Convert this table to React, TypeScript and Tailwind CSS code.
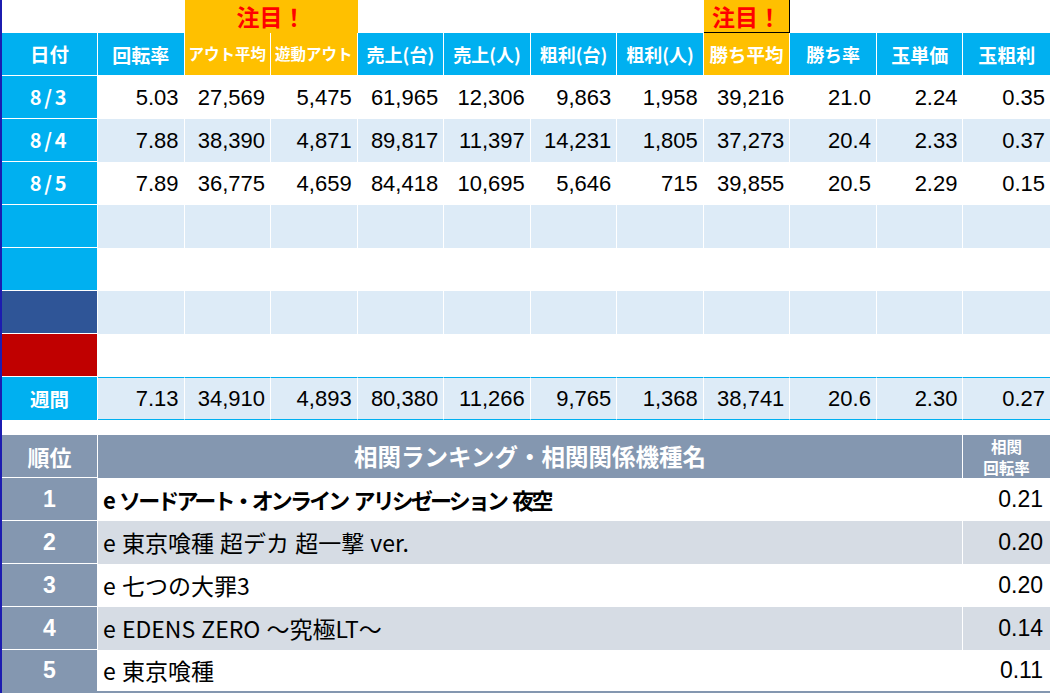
const JP = "font-['Noto_Sans_CJK_JP','Noto_Sans',sans-serif]";
const NUM = "font-['Liberation_Sans','Noto_Sans_CJK_JP',sans-serif]";

const heads = [
  { t: '日付', s: 'text-[19.5px]', o: false },
  { t: '回転率', s: 'text-[19px]', o: false },
  { t: 'アウト平均', s: 'text-[15.5px]', o: true },
  { t: '遊動アウト', s: 'text-[15.5px]', o: true },
  { t: '売上(台)', s: 'text-[18px]', o: false },
  { t: '売上(人)', s: 'text-[18px]', o: false },
  { t: '粗利(台)', s: 'text-[18px]', o: false },
  { t: '粗利(人)', s: 'text-[18px]', o: false },
  { t: '勝ち平均', s: 'text-[18.5px]', o: true },
  { t: '勝ち率', s: 'text-[18px]', o: false },
  { t: '玉単価', s: 'text-[19px]', o: false },
  { t: '玉粗利', s: 'text-[19px]', o: false },
];

const rows = [
  { d: '8/3', bg: 'bg-[#00b0f0]', v: ['5.03', '27,569', '5,475', '61,965', '12,306', '9,863', '1,958', '39,216', '21.0', '2.24', '0.35'] },
  { d: '8/4', bg: 'bg-[#00b0f0]', v: ['7.88', '38,390', '4,871', '89,817', '11,397', '14,231', '1,805', '37,273', '20.4', '2.33', '0.37'] },
  { d: '8/5', bg: 'bg-[#00b0f0]', v: ['7.89', '36,775', '4,659', '84,418', '10,695', '5,646', '715', '39,855', '20.5', '2.29', '0.15'] },
  { d: '', bg: 'bg-[#00b0f0]', v: Array(11).fill('') },
  { d: '', bg: 'bg-[#00b0f0]', v: Array(11).fill('') },
  { d: '', bg: 'bg-[#2f5597]', v: Array(11).fill('') },
  { d: '', bg: 'bg-[#c00000]', v: Array(11).fill('') },
];

const week = ['7.13', '34,910', '4,893', '80,380', '11,266', '9,765', '1,368', '38,741', '20.6', '2.30', '0.27'];

const ranking = [
  { n: 'e ソードアート・オンライン アリシゼーション 夜空', v: '0.21', bold: true },
  { n: 'e 東京喰種 超デカ 超一撃 ver.', v: '0.20' },
  { n: 'e 七つの大罪3', v: '0.20' },
  { n: 'e EDENS ZERO ～究極LT～', v: '0.14' },
  { n: 'e 東京喰種', v: '0.11' },
];

const grid = 'grid grid-cols-[96px_repeat(11,minmax(0,1fr))]';

const App = () => {
  return (
    <div className={`w-[1051px] h-[695px] bg-white overflow-hidden ${JP}`}>
      <div className="w-[1050px] border-l-2 border-[#1c1cb0]">
        {/* 注目 row */}
        <div className={`${grid} h-[33px]`}>
          <div /><div />
          <div className="col-span-2 bg-[#ffc000] flex items-center justify-center text-[23px] font-bold text-[#ff0000] leading-[33px]">注目！</div>
          <div /><div /><div /><div />
          <div className="bg-[#ffc000] border-r border-b border-black flex items-center justify-center text-[23px] font-bold text-[#ff0000] leading-[32px]">注目！</div>
          <div /><div /><div />
        </div>

        {/* Header */}
        <div className={`${grid} h-[43px]`}>
          {heads.map((h, i) => (
            <div key={i} className={`${h.o ? 'bg-[#ffc000]' : 'bg-[#00b0f0]'} ${h.s} ${i < heads.length - 1 ? 'border-r' : ''} border-b border-white text-white font-bold flex items-center justify-center whitespace-nowrap leading-none`}>{h.t}</div>
          ))}
        </div>

        {/* Daily rows */}
        {rows.map((r, ri) => (
          <div key={ri} className={`${grid} h-[43px] ${ri % 2 ? 'bg-[#ddebf7]' : 'bg-white'}`}>
            <div className={`${r.bg} border-b border-r border-white text-white font-bold text-[20px] tracking-[0.14em] flex items-center justify-center`}>{r.d}</div>
            {r.v.map((v, i) => (
              <div key={i} className={`${i < 10 ? 'border-r' : ''} border-white ${NUM} text-[22px] text-black flex items-center justify-end pr-[5px]`}>{v}</div>
            ))}
          </div>
        ))}

        {/* Weekly */}
        <div className={`${grid} h-[43px] bg-[#ddebf7]`}>
          <div className="bg-[#00b0f0] border-r border-white text-white font-bold text-[19.5px] flex items-center justify-center">週間</div>
          {week.map((v, i) => (
            <div key={i} className={`${i < 10 ? 'border-r' : ''} border-y border-white border-y-[#00b0f0] ${NUM} text-[22px] text-black flex items-center justify-end pr-[5px]`}>{v}</div>
          ))}
        </div>

        <div className="h-[15px]" />

        {/* Ranking */}
        <div className="grid grid-cols-[96px_1fr_87px] h-[43px] bg-[#8497b0] text-white font-bold">
          <div className="border-r border-b border-white text-[22px] flex items-center justify-center">順位</div>
          <div className="border-r border-white text-[23.5px] flex items-center justify-center">相関ランキング・相関関係機種名</div>
          <div className="text-[15.5px] leading-[21px] flex flex-col items-center justify-center">
            <span>相関</span>
            <span>回転率</span>
          </div>
        </div>
        {ranking.map((r, i) => (
          <div key={i} className={`grid grid-cols-[96px_1fr_87px] h-[43px] ${i % 2 ? 'bg-[#d6dce4]' : 'bg-white'} ${i === ranking.length - 1 ? 'border-b-2 border-[#8497b0]' : ''}`}>
            <div className={`bg-[#8497b0] border-r ${i < ranking.length - 1 ? 'border-b' : ''} border-white text-white font-bold text-[23px] ${NUM} flex items-center justify-center`}>{i + 1}</div>
            <div className={`border-r border-white text-black pl-[5px] flex items-center whitespace-nowrap ${r.bold ? 'font-bold text-[22px] tracking-[-0.13em] [word-spacing:4px]' : 'text-[23px] [word-spacing:1px]'}`}>{r.n}</div>
            <div className={`${NUM} text-[23px] text-black flex items-center justify-end pr-[7px]`}>{r.v}</div>
          </div>
        ))}
      </div>
    </div>
  );
};

export default App;
